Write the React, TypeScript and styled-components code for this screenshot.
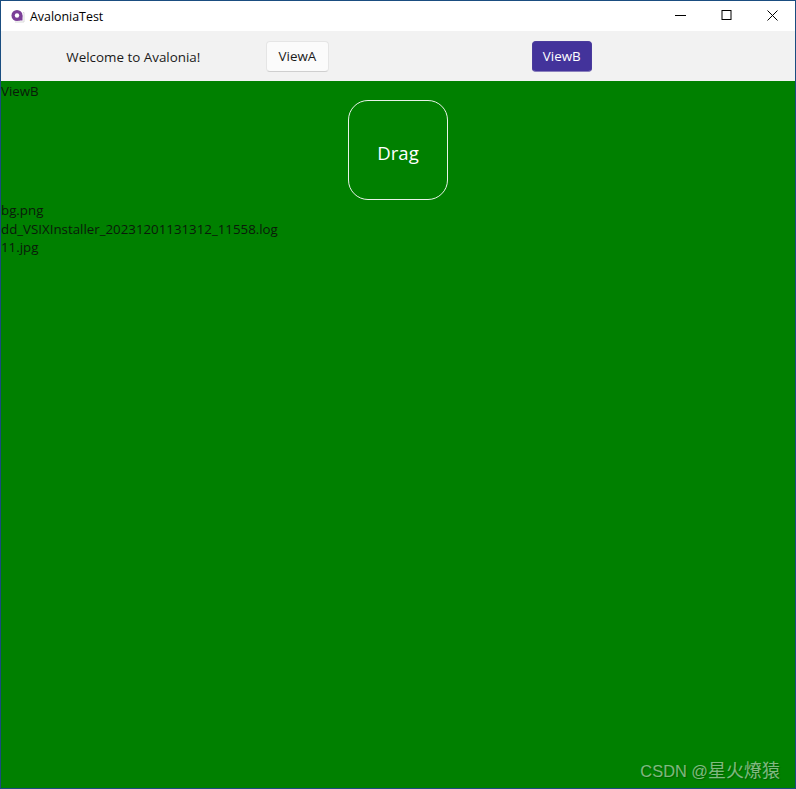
import React from "react";
import styled, { createGlobalStyle } from "styled-components";

const Global = createGlobalStyle`
  html, body { margin: 0; padding: 0; height: 100%; background: #fff; }
  #root { height: 100%; }
  * { box-sizing: border-box; }
`;

const uiFont = `"Open Sans", "Noto Sans", "Liberation Sans", sans-serif`;

const Frame = styled.div`
  width: 796px;
  height: 789px;
  display: flex;
  flex-direction: column;
  position: relative;
  overflow: hidden;
  border: 1px solid #1a4d80;
  font-family: ${uiFont};
  color: #000;
`;

const TitleBar = styled.header`
  height: 30px;
  flex: none;
  background: #fff;
  display: flex;
  align-items: center;
  padding-left: 10px;
`;

const AppTitle = styled.span`
  font-size: 12.4px;
  margin-left: 5px;
  flex: 1;
`;

const WinButton = styled.button`
  width: 46px;
  height: 30px;
  padding: 0;
  border: 0;
  background: transparent;
  display: flex;
  align-items: center;
  justify-content: center;
  position: relative;
  top: -1px;
`;

const Toolbar = styled.nav`
  height: 50px;
  flex: none;
  background: #f2f2f2;
  display: grid;
  grid-template-columns: repeat(3, 1fr);
  align-items: center;
`;

const Welcome = styled.span`
  font-size: 13.4px;
  line-height: 18px;
  padding-top: 2px;
  justify-self: center;
  color: #1a1a1a;
`;

const NavButton = styled.button<{ $accent?: boolean }>`
  justify-self: start;
  height: 31px;
  width: ${(p) => (p.$accent ? "60px" : "62.5px")};
  margin-left: ${(p) => (p.$accent ? "1.5px" : "0.5px")};
  border-radius: 4px;
  font-family: ${uiFont};
  font-size: 13.4px;
  padding: 0 0 1px;
  color: ${(p) => (p.$accent ? "#fff" : "#1a1a1a")};
  background: ${(p) => (p.$accent ? "#43339b" : "#fbfbfb")};
  border: 1px solid ${(p) => (p.$accent ? "#4a3c9c" : "#e5e5e5")};
  border-bottom-color: ${(p) => (p.$accent ? "#8a80bd" : "#cfcfcf")};
`;

const Content = styled.main`
  flex: 1;
  background: #008000;
  display: flex;
  flex-direction: column;
  font-size: 13.3px;
  line-height: 19px;
  color: #0a1a0a;
`;

const Label = styled.div`
  height: 18.6px;
  &:first-child { height: 19px; padding-top: 1px; }
`;

const DragBox = styled.div`
  width: 100px;
  height: 100px;
  flex: none;
  align-self: center;
  margin-bottom: 1px;
  padding-top: 4px;
  border: 1px solid #e8f2e8;
  border-radius: 20px;
  display: flex;
  align-items: center;
  justify-content: center;
  color: #fff;
  font-size: 18.6px;
`;

const Watermark = styled.span`
  position: absolute;
  right: 15px;
  bottom: 6px;
  font-family: "Liberation Sans", "Noto Sans CJK SC", sans-serif;
  font-size: 16.4px;
  line-height: 22px;
  color: rgba(255, 255, 255, 0.5);
  text-shadow: 1px 1px 1px rgba(0, 40, 0, 0.35);
`;

const WatermarkName = styled.span`
  font-size: 18px;
`;

export default function App() {
  return (
    <>
      <Global />
      <Frame>
        <TitleBar>
          <svg width="14" height="14" viewBox="0 0 14 14">
            <path d="M12 3.5h1v9.5H4" fill="none" stroke="#d9d9d9" strokeWidth="1" />
            <circle cx="6" cy="6.5" r="5.5" fill="#7b3f98" />
            <rect x="8" y="6.5" width="3.5" height="5" fill="#7b3f98" />
            <circle cx="6" cy="6.5" r="2.2" fill="#fff" />
          </svg>
          <AppTitle>AvaloniaTest</AppTitle>
          <WinButton aria-label="Minimize">
            <svg width="11" height="11" viewBox="0 0 11 11">
              <path d="M0 5.5h11" stroke="#000" strokeWidth="1" />
            </svg>
          </WinButton>
          <WinButton aria-label="Maximize">
            <svg width="11" height="11" viewBox="0 0 11 11">
              <rect x="1" y="0.5" width="9" height="9" fill="none" stroke="#000" strokeWidth="1" />
            </svg>
          </WinButton>
          <WinButton aria-label="Close">
            <svg width="11" height="11" viewBox="0 0 11 11">
              <path d="M0.5 0.5l10 10M10.5 0.5l-10 10" stroke="#000" strokeWidth="1" />
            </svg>
          </WinButton>
        </TitleBar>
        <Toolbar>
          <Welcome>Welcome to Avalonia!</Welcome>
          <NavButton>ViewA</NavButton>
          <NavButton $accent>ViewB</NavButton>
        </Toolbar>
        <Content>
          <Label>ViewB</Label>
          <DragBox>Drag</DragBox>
          <Label>bg.png</Label>
          <Label>dd_VSIXInstaller_20231201131312_11558.log</Label>
          <Label>11.jpg</Label>
        </Content>
        <Watermark>
          CSDN @<WatermarkName>星火燎猿</WatermarkName>
        </Watermark>
      </Frame>
    </>
  );
}
